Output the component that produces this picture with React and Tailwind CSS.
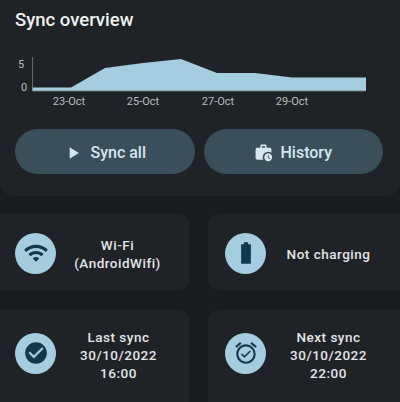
import { MdAlarmOn, MdCheckCircle, MdPlayArrow, MdWifi, MdWorkHistory } from "react-icons/md";

const ACTIONS = [
  { label: "Sync all", Icon: MdPlayArrow, iconClass: "w-[20px] h-[20px]", gap: "gap-[7px]" },
  { label: "History", Icon: MdWorkHistory, iconClass: "w-[19px] h-[19px]", gap: "gap-[7px]" },
];

const SlimBattery = ({ className }) => (
  <svg viewBox="0 0 24 24" fill="currentColor" className={className}>
    <path d="M10 2h4v2h2.5v18h-9V4H10z" />
  </svg>
);

const StatusCard = ({ Icon, lines, className, textClass }) => (
  <div className={`flex items-center bg-[#1f2327] ${className}`}>
    <div className="w-[41px] h-[41px] shrink-0 rounded-full bg-[#a5cde0] flex items-center justify-center text-[#12384b]">
      <Icon className="w-[26px] h-[26px]" />
    </div>
    <div className={`flex-1 text-center text-[13.5px] leading-[18px] font-medium tracking-[0.5px] text-[#e3e5e7] ${textClass}`}>
      {lines.map((line) => (
        <div key={line}>{line}</div>
      ))}
    </div>
  </div>
);

const Chart = () => (
  <svg width="400" height="70" viewBox="0 0 400 70" className="block -mx-[15px]">
    <path
      d="M32 47.5 L71 47.5 L105 28 L143 23 L181 19 L217 33 L255 33 L292 37.5 L366 37.5 L366 51 L32 51 Z"
      fill="#a5cde0"
    />
    <path d="M32.5 17 V51 H366" fill="none" stroke="#6f7b82" strokeWidth="0.8" />
    <g fill="#b9bdc0" fontSize="11" fontFamily="Roboto, sans-serif">
      <text x="21" y="28" textAnchor="middle">5</text>
      <text x="24" y="51" textAnchor="middle">0</text>
      <text x="69" y="65" textAnchor="middle">23-Oct</text>
      <text x="143" y="65" textAnchor="middle">25-Oct</text>
      <text x="218" y="65" textAnchor="middle">27-Oct</text>
      <text x="292" y="65" textAnchor="middle">29-Oct</text>
    </g>
  </svg>
);

export default function App() {
  return (
    <div className="w-[400px] h-[402px] overflow-hidden bg-[#181b1f] font-['Roboto',sans-serif]">
      <section className="h-[196px] bg-[#1f2327] rounded-b-[14px] px-[15px] pt-[8px]">
        <h1 className="text-[18.5px] leading-[24px] font-medium text-[#eef0f1]">Sync overview</h1>
        <div className="mt-[8px] h-[70px]">
          <Chart />
        </div>
        <div className="mt-[19px] flex gap-[9px] pr-[2px]">
          {ACTIONS.map(({ label, Icon, iconClass, gap }) => (
            <button
              key={label}
              type="button"
              className={`flex-1 h-[45px] pt-[2px] rounded-full bg-[#3a4f5a] flex items-center justify-center text-[#d6e6f0] text-[16px] font-medium ${gap}`}
            >
              <Icon className={iconClass} />
              {label}
            </button>
          ))}
        </div>
      </section>
      <div className="mt-[18px] grid grid-cols-[190px_192px] gap-x-[18px] gap-y-[20px]">
        <StatusCard
          Icon={MdWifi}
          lines={["Wi-Fi", "(AndroidWifi)"]}
          className="h-[76px] pt-[2px] rounded-r-[12px] pl-[15px] pr-[11px]"
          textClass="mt-[1px]"
        />
        <StatusCard
          Icon={SlimBattery}
          lines={["Not charging"]}
          className="h-[76px] pt-[2px] rounded-l-[12px] pl-[17px] pr-[9px]"
          textClass="mt-[1px]"
        />
        <StatusCard
          Icon={MdCheckCircle}
          lines={["Last sync", "30/10/2022", "16:00"]}
          className="h-[92px] pb-[6px] rounded-tr-[12px] pl-[15px] pr-[9px]"
          textClass="mt-[4px]"
        />
        <StatusCard
          Icon={MdAlarmOn}
          lines={["Next sync", "30/10/2022", "22:00"]}
          className="h-[92px] pb-[6px] rounded-tl-[12px] pl-[17px] pr-[9px]"
          textClass="mt-[4px]"
        />
      </div>
    </div>
  );
}
